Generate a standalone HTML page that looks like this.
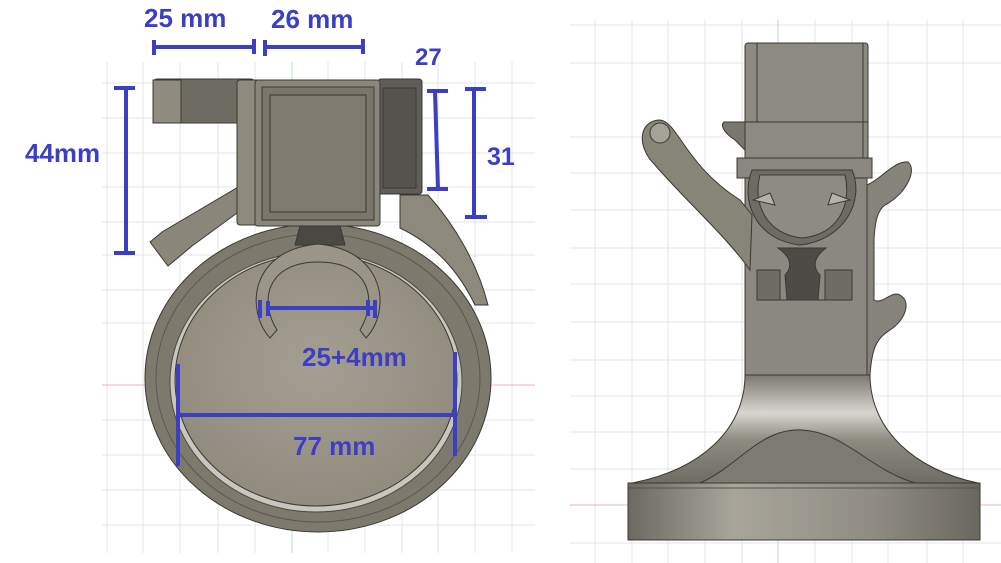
<!DOCTYPE html>
<html><head><meta charset="utf-8"><style>
html,body{margin:0;padding:0;background:#fff;width:1001px;height:563px;overflow:hidden}
svg{display:block}
text{font-family:"Liberation Sans",Arial,sans-serif;font-weight:bold;fill:#3c3fc4}
</style></head><body>
<svg width="1001" height="563" viewBox="0 0 1001 563">
<defs>
<linearGradient id="flare" x1="0" x2="0" y1="0" y2="1">
<stop offset="0" stop-color="#7c7970"/><stop offset="0.35" stop-color="#d8d6d0"/><stop offset="0.6" stop-color="#8d8a80"/><stop offset="1" stop-color="#6f6c64"/></linearGradient>
<linearGradient id="base" x1="0" x2="1"><stop offset="0" stop-color="#6b6961"/><stop offset="0.3" stop-color="#a8a59b"/><stop offset="0.7" stop-color="#8f8c83"/><stop offset="1" stop-color="#6a675f"/></linearGradient>
<radialGradient id="face" cx="0.5" cy="0.45" r="0.6"><stop offset="0" stop-color="#a49f90"/><stop offset="1" stop-color="#8f8a7c"/></radialGradient>
</defs>
<g stroke="#e6e6e6" stroke-width="1">
<path d="M107 62V553M143 62V553M180 62V553M218 62V553M255 62V553M328 62V553M365 62V553M402 62V553M438 62V553M475 62V553M512 62V553"/>
<path d="M102 83H535M102 118H535M102 153H535M102 187H535M102 222H535M102 255H535M102 290H535M102 323H535M102 420H535M102 455H535M102 490H535M102 525H535"/>
</g>
<path d="M292 62V553" stroke="#b8e6b8"/>
<path d="M102 385H535" stroke="#f2b0b0"/>
<g stroke="#e6e6e6">
<path d="M595 20V563M632 20V563M668 20V563M705 20V563M742 20V563M815 20V563M852 20V563M888 20V563M927 20V563M963 20V563"/>
<path d="M570 25H1001M570 63H1001M570 137H1001M570 173H1001M570 210H1001M570 248H1001M570 284H1001M570 322H1001M570 360H1001M570 396H1001M570 432H1001M570 469H1001M570 543H1001"/>
</g>
<path d="M778 20V563" stroke="#c8c8f0"/>
<path d="M570 505H1001" stroke="#f2b0b0"/>

<g stroke="#3a3833" stroke-width="1">
<ellipse cx="318" cy="378" rx="173" ry="154" fill="#7d796d"/>
<ellipse cx="318" cy="378" rx="162" ry="144" fill="none" stroke="#5a574f"/>
<path d="M400 195 L428 195 C455 225 478 265 488 305 L475 305 C458 270 435 245 400 228 Z" fill="#8d897c"/>
<ellipse cx="316" cy="382" rx="146" ry="130" fill="#c9c6bd" stroke="#4d4a43"/>
<ellipse cx="316" cy="380" rx="141" ry="126" fill="url(#face)"/>
<path d="M150 242 L162 232 L240 186 L248 205 L192 246 L168 266 Z" fill="#8a867a"/>
<rect x="153" y="79" width="102" height="44" rx="4" fill="#6e6b63"/>
<rect x="153" y="80" width="28" height="43" fill="#8f8b7f"/>
<rect x="378" y="79" width="44" height="115" rx="3" fill="#5f5d57"/>
<rect x="383" y="88" width="33" height="100" fill="#55534e"/>
<rect x="237" y="80" width="30" height="145" rx="3" fill="#8e8a7e"/>
<rect x="255" y="80" width="125" height="146" rx="3" fill="#8a867b"/>
<rect x="262" y="87" width="112" height="133" fill="#7a766c"/>
<rect x="270" y="95" width="96" height="117" fill="#7e7a70"/>
<path d="M300 226 H340 L345 245 H295 Z" fill="#4a4843"/>
<path d="M270 338 C245 310 250 250 318 244 C385 250 392 310 366 338 L360 330 C378 300 370 262 318 262 C268 262 258 300 277 330 Z" fill="#9a9588"/>
</g>

<g stroke="#3c3fc4" stroke-width="4" fill="none">
<path d="M154 47H254M154 40V55M254 39V54"/>
<path d="M265 47H363M265 40V56M363 39V54"/>
<path d="M126 88V253M114 88H135M114 253H135"/>
<path d="M435 91L438 189M427 91H448M427 189H448"/>
<path d="M474 89V217M465 89H486M465 217H487"/>
<path d="M268 308H375M260 300V318M268 301V316M368 300V316M375 300V318"/>
<path d="M178 415H455M178 364V466M455 352V456"/>
</g>
<text x="144" y="27" font-size="26">25 mm</text>
<text x="271" y="28" font-size="26">26 mm</text>
<text x="415" y="65" font-size="24">27</text>
<text x="25" y="162" font-size="26">44mm</text>
<text x="487" y="165" font-size="25">31</text>
<text x="302" y="366" font-size="26">25+4mm</text>
<text x="293" y="455" font-size="26">77 mm</text>

<g stroke="#3a3833" stroke-width="1">
<path d="M745 375 C745 430 700 470 632 483 H978 C915 470 870 430 870 375 Z" fill="url(#flare)"/>
<path d="M700 483 C740 465 760 428 802 430 C845 432 870 470 915 483 Z" fill="#7d7a72"/>
<rect x="628" y="483" width="352" height="57" fill="url(#base)"/>
<path d="M628 488H980" stroke="#55534d"/>
<path d="M867 185 C880 180 895 160 908 162 C918 170 905 195 885 205 C878 210 875 220 874 240 L874 300 C882 305 892 290 900 295 C912 302 905 320 890 330 C878 338 872 345 870 375 L860 375 L860 185 Z" fill="#86837a"/>
<rect x="745" y="160" width="122" height="215" fill="#8b8880"/>
<path d="M750 270 C725 235 685 200 655 165 C635 145 640 120 660 120 C678 122 685 165 740 200 L752 215 Z" fill="#878478"/>
<circle cx="660" cy="133" r="10" fill="#a5a297"/>
<rect x="745" y="43" width="123" height="117" rx="3" fill="#8d8a81"/>
<path d="M745 122H868M757 43V122M863 43V160"/>
<path d="M724 122 H745 V150 L735 140 C724 133 720 125 724 122 Z" fill="#7a776e"/>
<rect x="737" y="158" width="135" height="20" fill="#8a877e"/>
<path d="M752 170 C740 200 755 240 800 245 C845 240 865 200 852 170 Z" fill="#6e6b63"/>
<path d="M760 175 C752 205 768 235 802 238 C838 235 852 205 845 175 Z" fill="#8e8b83"/>
<path d="M778 248 C795 260 790 270 785 275 L787 300 H818 L820 275 C815 270 810 260 826 248 Z" fill="#4d4b46"/>
<path d="M757 270 H780 L780 300 H757 Z M825 270 H852 V300 H825 Z" fill="#6f6c64"/>
<path d="M757 300 H852"/>
<path d="M753 200 L770 193 L775 205 Z M850 200 L832 193 L828 205 Z" fill="#b5b2a8"/>
</g>
</svg>
</body></html>
